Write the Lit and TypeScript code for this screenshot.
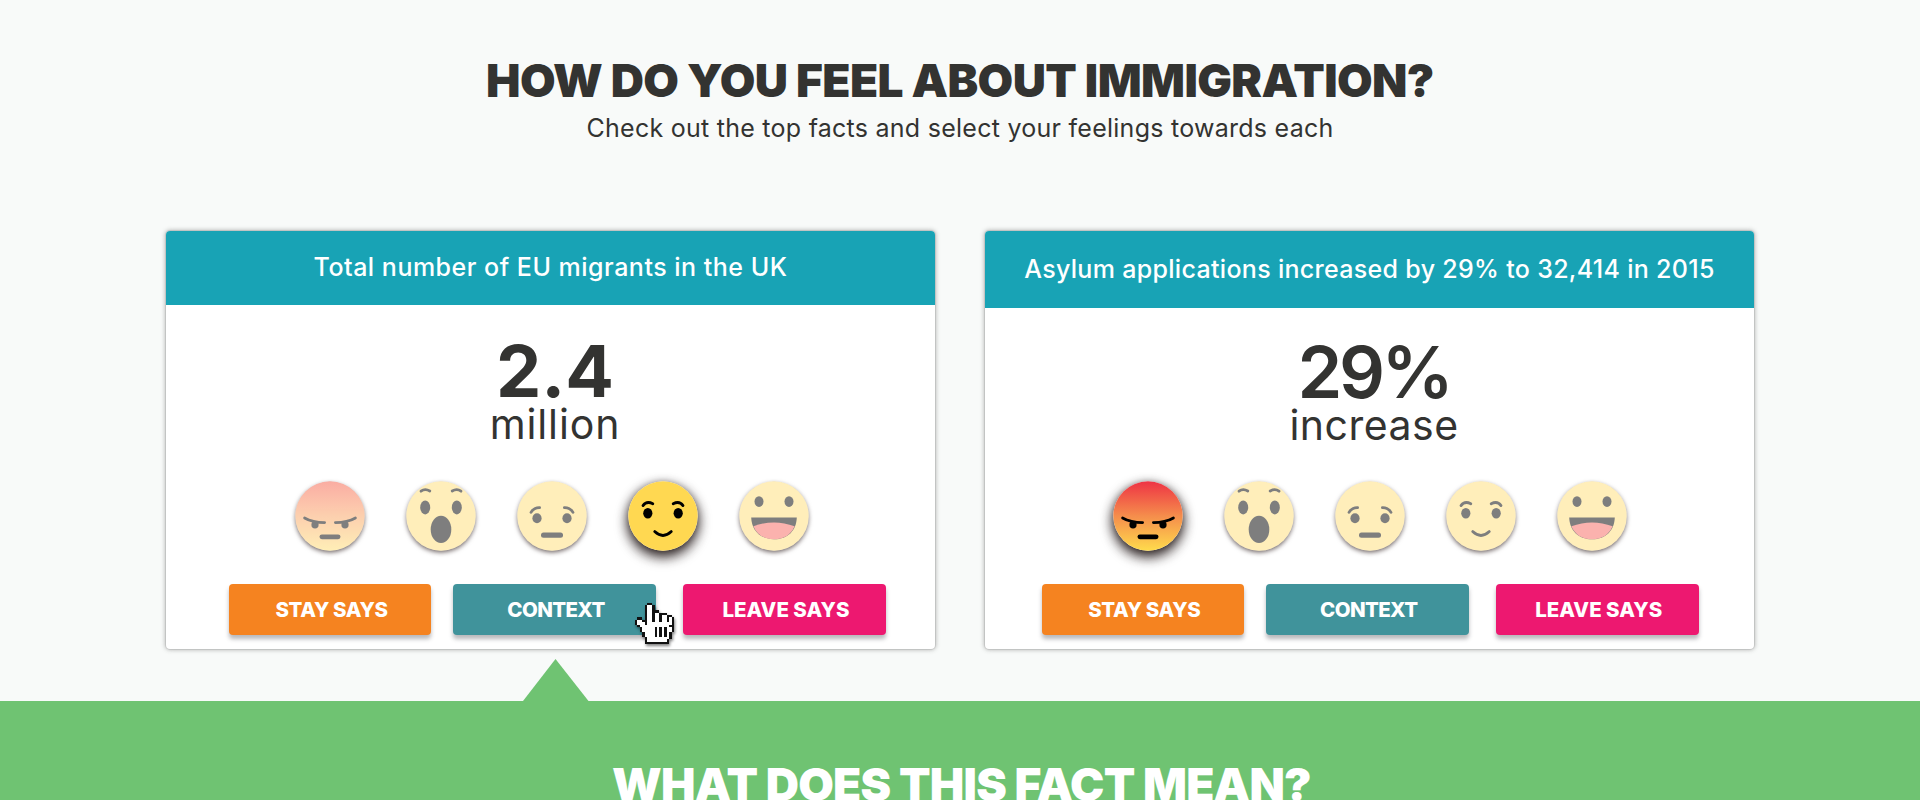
import { LitElement, html, svg, css } from "lit";
import { customElement, property } from "lit/decorators.js";
import { classMap } from "lit/directives/class-map.js";

type Mood = "angry" | "shocked" | "sad" | "happy" | "laughing";
const MOODS: Mood[] = ["angry", "shocked", "sad", "happy", "laughing"];

const FACES: Record<Mood, unknown> = {
  angry: svg`
    <g class="line">
      <path d="M-25.4 2 Q-17.5 6.6 -5.4 6.6"/>
      <path d="M25.4 2 Q17.5 6.6 5.4 6.6"/>
    </g>
    <ellipse cx="-15" cy="8.8" rx="3.6" ry="3.8"/>
    <ellipse cx="15" cy="8.8" rx="3.6" ry="3.8"/>
    <rect x="-10.5" y="18.4" width="21" height="4.8" rx="2.4"/>`,
  shocked: svg`
    <g class="line">
      <path d="M-20 -24.8 Q-16 -27.8 -11.2 -25"/>
      <path d="M20 -24.8 Q16 -27.8 11.2 -25"/>
    </g>
    <ellipse cx="-15.8" cy="-8.6" rx="5" ry="7"/>
    <ellipse cx="15.8" cy="-8.6" rx="5" ry="7"/>
    <ellipse cx="0" cy="13.4" rx="10.3" ry="13.7"/>`,
  sad: svg`
    <g class="line">
      <path d="M-21 -3.6 Q-18 -8.6 -12.4 -8.4"/>
      <path d="M21 -3.6 Q18 -8.6 12.4 -8.4"/>
    </g>
    <ellipse cx="-15" cy="2.3" rx="4.6" ry="5"/>
    <ellipse cx="15" cy="2.3" rx="4.6" ry="5"/>
    <rect x="-11" y="16.4" width="22" height="5.4" rx="2.5"/>`,
  happy: svg`
    <g class="line">
      <path d="M-20 -10.4 Q-16.4 -15.4 -10.2 -12.2"/>
      <path d="M20 -10.4 Q16.4 -15.4 10.2 -12.2"/>
      <path d="M-8.3 15.6 Q0 23.4 8.3 15.6"/>
    </g>
    <ellipse cx="-15.2" cy="-2.8" rx="4.6" ry="5.3"/>
    <ellipse cx="15.2" cy="-2.8" rx="4.6" ry="5.3"/>`,
  laughing: svg`
    <ellipse cx="-15" cy="-14.4" rx="4.5" ry="5.3"/>
    <ellipse cx="15" cy="-14.4" rx="4.5" ry="5.3"/>
    <path d="M-22.8 1.4 H22.8 C22.4 14 14 23.2 0 23.2 C-14 23.2 -22.4 14 -22.8 1.4Z"/>
    <path class="tongue" d="M-20.6 10.2 Q0 2.6 20.6 10.2 C17 18.6 10 23.2 0 23.2 C-10 23.2 -17 18.6 -20.6 10.2Z"/>`,
};

const HAND = [
  ".....##.........",
  "....#oo#........",
  "....#oo#........",
  "....#oo###......",
  "....#oo#oo###...",
  "....#oo#oo#oo##.",
  ".##.#oo#oo#oo#o#",
  "#oo##oo#oo#oo#o#",
  "#ooo#oooooooooo#",
  ".#oooooooooooo##",
  "..#ooooo#o#o#oo#",
  "..#ooooo#o#o#oo#",
  "...#oooo#o#o#o#.",
  "...#oooo#o#o#o#.",
  "....#ooooooooo#.",
  "....#oooooooo#..",
  "....##########..",
];

@customElement("mood-face")
class MoodFace extends LitElement {
  @property() mood: Mood = "happy";
  @property({ type: Boolean }) active = false;

  static styles = css`
    :host { display: block; width: 70px; height: 70px; }
    svg { display: block; overflow: visible; }
    .shade { fill: #8a8282; filter: drop-shadow(0 2px 2.4px rgba(50, 35, 35, 0.75)); }
    .active .shade { filter: drop-shadow(0 5px 6.5px rgba(25, 15, 15, 0.95)) drop-shadow(0 1px 3px rgba(25, 15, 15, 0.4)); }
    .base { fill: #fff; }
    .paint { opacity: 0.5; fill: #000; }
    .active .paint { opacity: 1; }
    .skin { fill: #ffde77; }
    .active .skin { fill: #ffd851; }
    .line { fill: none; stroke: #000; stroke-width: 2.8; stroke-linecap: round; }
    .tongue { fill: #f9685f; }
  `;

  render() {
    return html`
      <svg class=${classMap({ active: this.active })} width="70" height="70" viewBox="-35 -35 70 70">
        <defs>
          <linearGradient id="heat" x1="0" y1="0" x2="0" y2="1">
            <stop offset="0" stop-color=${this.active ? "#ee3344" : "#f55a46"}></stop>
            <stop offset="0.5" stop-color=${this.active ? "#f58d4c" : "#fba160"}></stop>
            <stop offset="1" stop-color=${this.active ? "#ffdb4c" : "#ffdf70"}></stop>
          </linearGradient>
        </defs>
        <circle class="shade" r="34.2"></circle>
        <circle class="base" r="34.7"></circle>
        <g class="paint">
          ${this.mood === "angry"
            ? svg`<circle r="34.7" fill="url(#heat)"></circle>`
            : svg`<circle class="skin" r="34.7"></circle>`}
          ${FACES[this.mood]}
        </g>
      </svg>`;
  }
}

@customElement("fact-card")
class FactCard extends LitElement {
  @property() heading = "";
  @property() figure = "";
  @property() unit = "";
  @property() mood: Mood = "happy";
  @property({ type: Boolean, reflect: true }) wide = false;

  static styles = css`
    :host {
      display: block; box-sizing: border-box; width: 769px; height: 417.5px;
      background: #fff; border-radius: 4px;
      box-shadow: 0 0 0 1px rgba(120, 120, 120, 0.16), 0 0 4px 1px rgba(60, 60, 60, 0.34);
    }
    .top { height: 249.5px; }
    .heading {
      height: 73.5px; line-height: 73.5px; border-radius: 4px 4px 0 0; text-align: center;
      background: #18a3b5; color: #fff; font-size: 25px; font-weight: 500; letter-spacing: 0.5px;
      white-space: nowrap;
    }
    .stat { padding: 35.5px 0 0 9px; text-align: center; color: #333331; }
    .figure { font-size: 72px; line-height: 62px; font-weight: 700; }
    .unit { font-size: 41px; line-height: 44px; letter-spacing: 0.9px; }
    .moods { display: flex; justify-content: center; gap: 41px; padding-left: 2px; }
    .actions { display: flex; justify-content: center; margin-top: 33px; padding-left: 13.5px; }
    button {
      width: 202.5px; height: 51.5px; margin: 0 22px 0 0; padding: 0 0 0 3px; border: 0; border-radius: 4px;
      font: 800 20.5px "Inter", sans-serif; color: #fff; letter-spacing: -0.4px;
      box-shadow: 0 4px 4px rgba(60, 60, 70, 0.36);
    }
    .stay { background: #f58320; }
    .context { background: #40939b; letter-spacing: -0.65px; margin-right: 27.5px; }
    .leave { background: #ed1870; letter-spacing: 0; margin-right: 0; }

    :host([wide]) .heading { height: 77px; line-height: 77px; letter-spacing: 0.31px; }
    :host([wide]) .stat { padding-top: 33px; }
    :host([wide]) .figure { font-weight: 600; letter-spacing: -3.4px; }
    :host([wide]) .unit { letter-spacing: 0.5px; }
    :host([wide]) .moods { padding-left: 1px; }
    :host([wide]) .actions { padding-left: 1px; }
  `;

  render() {
    return html`
      <div class="top">
        <div class="heading">${this.heading}</div>
        <div class="stat">
          <div class="figure">${this.figure}</div>
          <div class="unit">${this.unit}</div>
        </div>
      </div>
      <div class="moods">
        ${MOODS.map((m) => html`<mood-face .mood=${m} .active=${m === this.mood}></mood-face>`)}
      </div>
      <div class="actions">
        <button class="stay">STAY SAYS</button>
        <button class="context">CONTEXT</button>
        <button class="leave">LEAVE SAYS</button>
      </div>`;
  }
}

@customElement("app-root")
class AppRoot extends LitElement {
  static styles = css`
    :host {
      display: block; position: relative; box-sizing: border-box; width: 1920px; height: 800px; overflow: hidden;
      background: #f8faf9; color: #333331; font-family: "Inter", sans-serif;
    }
    .intro { height: 231px; padding-top: 52px; box-sizing: border-box; text-align: center; }
    h1, h2 { margin: 0; font-size: 46px; line-height: 56px; font-weight: 900; letter-spacing: -0.59px; }
    p { margin: 5px 0 0; font-size: 25px; line-height: 30px; letter-spacing: 0.26px; }
    .cards { display: flex; gap: 50px; padding-left: 166px; height: 428px; }
    .arrow { display: block; margin-left: 523px; }
    .meaning { height: 99px; padding-top: 55px; box-sizing: border-box; background: #6fc372; text-align: center; overflow: hidden; }
    .meaning h2 { color: #fff; letter-spacing: -0.74px; padding-left: 3px; }
    .pointer { position: absolute; left: 635px; top: 603px; filter: drop-shadow(1px 2px 1.5px rgba(0, 0, 0, 0.5)); }
  `;

  render() {
    return html`
      <header class="intro">
        <h1>HOW DO YOU FEEL ABOUT IMMIGRATION?</h1>
        <p>Check out the top facts and select your feelings towards each</p>
      </header>
      <main class="cards">
        <fact-card heading="Total number of EU migrants in the UK" figure="2.4" unit="million" mood="happy"></fact-card>
        <fact-card wide heading="Asylum applications increased by 29% to 32,414 in 2015" figure="29%" unit="increase" mood="angry"></fact-card>
      </main>
      <svg class="arrow" width="66" height="42" viewBox="0 0 66 42"><path d="M0 42 L32.5 0 L65.5 42Z" fill="#6fc372"/></svg>
      <section class="meaning"><h2>WHAT DOES THIS FACT MEAN?</h2></section>
      <svg class="pointer" width="39" height="41" viewBox="0 0 16 17" preserveAspectRatio="none" shape-rendering="crispEdges">
        ${HAND.flatMap((row, y) =>
          [...row].map((c, x) =>
            c === "." ? null : svg`<rect x=${x} y=${y} width="1" height="1" fill=${c === "#" ? "#111" : "#fff"}></rect>`
          )
        )}
      </svg>`;
  }
}
